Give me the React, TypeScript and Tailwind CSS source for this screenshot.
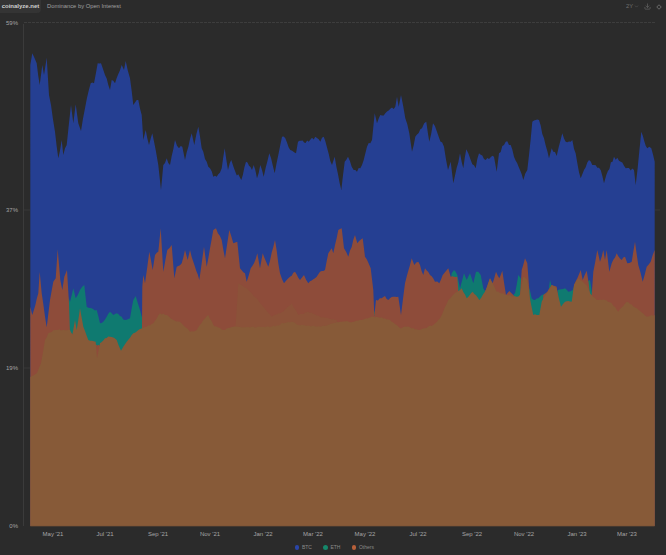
import React from "react";
import { ChevronDown, Download } from "lucide-react";

type P = [number, number];
const conv = (ox: number, oy: number, pts: P[]): P[] =>
  pts.map(([x, y]) => [ox + x / 3, oy + y / 3] as P);
const BASE = 526;
const L = 30.3;
const R = 654.6;

const hash = (n: number) => {
  const s = Math.sin(n * 127.1) * 43758.5453;
  return s - Math.floor(s);
};

// Adds the fine day-to-day jitter of the series between the traced points.
const densify = (pts: P[], amp: number, seed: number): P[] => {
  const out: P[] = [];
  for (let i = 0; i < pts.length - 1; i++) {
    const [x0, y0] = pts[i];
    const [x1, y1] = pts[i + 1];
    out.push([x0, y0]);
    const steps = Math.floor((x1 - x0) / 1.5);
    for (let s = 1; s < steps; s++) {
      const t = s / steps;
      const n = hash(seed + i * 31 + s) - 0.5;
      out.push([x0 + (x1 - x0) * t, y0 + (y1 - y0) * t + n * amp * 2]);
    }
  }
  out.push(pts[pts.length - 1]);
  return out;
};

const poly = (pts: P[]) => {
  const a = pts[0][0];
  const b = pts[pts.length - 1][0];
  return [`${a},${BASE}`, ...pts.map(([x, y]) => `${x.toFixed(1)},${y.toFixed(1)}`), `${b},${BASE}`].join(" ");
};

const blue: P[] = densify([
  ...conv(25, 45, [[16,60],[22,25],[35,55],[44,120],[52,60],[57,90],[65,38],[72,150],[78,180],[90,260],[100,340],[110,285],[115,330],[125,300],[138,180],[145,235],[152,178],[160,235],[168,258],[180,190],[197,115],[207,115],[218,55],[228,55],[240,90],[255,135],[260,105],[270,115],[290,60],[297,75],[302,48],[315,100],[325,180],[340,165],[350,210],[355,285],[362,255],[372,300],[382,265],[392,315],[400,360],[408,435],[415,360],[425,340],[435,360],[450,285],[462,310],[472,305],[480,345],[500,265],[508,300],[520,245],[530,310],[545,350],[565,395],[575,395],[590,370]]),
  ...conv(222, 90, [[8,175],[18,240],[28,210],[40,245],[58,270],[72,215],[90,240],[95,225],[105,265],[115,225],[125,260],[142,190],[158,250],[180,140],[190,145],[205,180],[222,190],[228,155],[260,155],[280,140],[295,155],[305,140],[330,225],[338,200],[358,300],[368,215],[378,200],[395,240],[405,245],[420,225],[435,170],[450,150],[458,70],[465,100],[475,75],[490,70],[520,50],[525,20],[530,50],[537,15],[550,85],[562,130],[570,185],[580,140],[600,115],[613,95],[622,155],[633,100],[650,140],[666,170]]),
  ...conv(444, 90, [[12,240],[20,215],[28,280],[48,190],[58,235],[67,178],[80,210],[95,235],[105,190],[125,210],[150,200],[158,245],[165,190],[185,155],[200,165],[210,200],[238,270],[250,240],[265,95],[285,90],[300,145],[315,205],[323,175],[338,198],[355,130],[365,155],[385,150],[410,265],[435,210],[450,225],[470,240],[480,280],[487,255],[510,200],[530,215],[545,235],[570,240],[575,285],[592,125],[610,175],[622,175],[632,215]]),
], 1.8, 11);

const red: P[] = densify([
  ...conv(25, 220, [[16,260],[22,285],[40,220],[44,155],[50,220],[65,322],[75,240],[85,185],[92,175],[98,88],[106,180],[112,210],[118,170],[126,150],[132,250],[135,340],[350,430],[352,200],[355,165]]),
  ...conv(140, 220, [[10,165],[15,190],[28,95],[38,150],[45,105],[55,95],[62,25],[70,155],[82,90],[95,75],[103,175],[110,140],[125,130],[135,90],[143,120],[150,90],[160,125],[178,180],[192,80],[200,140],[220,30],[228,25],[245,60],[255,115],[268,30],[280,70],[292,65],[300,145],[315,160],[320,185],[332,145],[342,130],[352,100],[360,145],[368,100],[385,140],[405,60],[420,160],[432,190],[445,175],[465,155],[480,180],[492,165],[505,190],[525,175],[540,155]]),
  ...conv(320, 220, [[15,150],[25,100],[35,85],[40,100],[55,30],[65,25],[72,85],[85,110],[105,45],[112,70],[128,55],[135,110],[152,145],[160,210],[163,288],[168,240],[185,235],[195,228],[205,240],[220,230],[235,230],[243,285],[255,190],[275,115],[283,135],[295,125],[310,165],[315,145],[330,165],[345,185],[358,190],[368,165],[385,145],[392,170],[412,170],[418,250],[490,255],[495,215],[510,175]]),
  ...conv(490, 230, [[8,160],[18,125],[28,145],[37,122],[48,195],[58,183],[70,195],[85,205],[90,195],[95,120],[105,85],[112,100],[118,180],[122,265],[155,265],[160,195],[172,185],[178,175],[185,165],[200,170],[208,235],[248,235],[252,165],[262,145],[272,120],[278,150],[290,122],[296,160],[300,195],[305,195],[310,125],[322,60],[330,95],[340,60],[345,90],[350,60],[358,125],[365,100],[380,70],[395,90],[405,80],[412,100],[425,95],[435,35],[445,105],[458,155],[470,110],[482,95],[494,60]]),
], 1.1, 47);

const mid: P[] = densify(
  conv(140, 220, [[285,340],[295,190],[320,205],[350,235],[370,260],[395,290],[430,275],[455,250],[475,285],[505,275],[540,290],[590,300],[600,340]]),
  0.6, 83);

const brown: P[] = densify([
  [L, 377], [37, 373],
  ...conv(25, 220, [[48,430],[60,360],[70,340],[90,330],[135,330],[142,345],[150,300],[155,330],[165,265],[175,320],[190,360],[212,365],[216,415],[225,370],[240,355],[255,350],[275,360],[288,392],[295,380],[305,365],[320,345],[340,330]]),
  ...conv(140, 220, [[20,320],[40,310],[60,280],[80,285],[100,300],[120,305],[150,335],[170,330],[190,300],[205,285],[220,315],[250,330],[280,320],[320,322],[395,320],[430,310],[455,305],[475,315],[540,320]]),
  ...conv(320, 220, [[60,305],[100,305],[160,290],[170,290],[210,300],[240,325],[260,320],[300,330],[340,315],[360,295],[385,240],[410,215],[425,205],[440,235],[458,215],[478,240],[495,215],[510,175]]),
  ...conv(490, 230, [[20,185],[50,195],[80,200],[90,195],[100,140],[112,150],[118,195],[130,255],[140,255],[148,255],[155,215],[170,190],[185,165],[200,175],[213,230],[225,215],[245,215],[252,165],[265,145],[290,165],[300,190],[320,210],[345,210],[365,220],[385,245],[410,215],[440,235],[470,260],[494,255]]),
], 0.7, 101);

const teal: P[][] = [
  conv(25, 220, [[128,300],[130,230],[135,245],[145,205],[152,235],[165,210],[178,195],[185,260],[200,265],[215,270],[225,310],[235,305],[255,275],[265,285],[275,280],[300,300],[315,295],[325,240],[332,228],[345,270],[353,300]]),
  conv(320, 220, [[160,270],[164,275],[166,290]]),
  conv(320, 220, [[390,200],[395,160],[402,150],[412,165],[420,205],[432,160],[440,180],[450,160],[460,190],[468,155],[475,155],[482,165],[490,205],[496,215]]),
  conv(490, 230, [[70,195],[75,190],[85,135],[92,145],[96,170]]),
  conv(490, 230, [[116,170],[125,205],[135,210],[145,205],[155,195],[165,190],[175,190],[180,150],[185,170]]),
  conv(490, 230, [[203,180],[225,175],[235,185],[248,180],[252,170]]),
  conv(490, 230, [[272,155],[275,150],[290,155],[300,150],[306,190]]),
].map((t, i) => densify(t, 1, 200 + i));

const xLabels: [string, number][] = [
  ["May '21", 53], ["Jul '21", 105], ["Sep '21", 158], ["Nov '21", 210], ["Jan '22", 263], ["Mar '22", 313],
  ["May '22", 365], ["Jul '22", 418], ["Sep '22", 472], ["Nov '22", 524], ["Jan '23", 577], ["Mar '23", 627],
];
const yLabels: [string, number][] = [["59%", 23], ["37%", 210], ["19%", 368], ["0%", 526]];

const legend: [string, string][] = [["BTC", "bg-[#2a45a8]"], ["ETH", "bg-[#15876a]"], ["Others", "bg-[#b8603a]"]];

export default function App() {
  return (
    <div className="flex h-[555px] w-[666px] flex-col overflow-hidden bg-[#2b2b2b] font-['Liberation_Sans',sans-serif]">
      <header className="flex h-[16px] items-start text-[5.8px]">
        <div className="flex h-[13px] w-[41px] items-center justify-center rounded-br-sm bg-[#343434] text-[6px] font-bold text-[#cfcfcf]">
          coinalyze.net
        </div>
        <div className="ml-[6px] flex h-[13px] items-center text-[#a0a0a0]">Dominance by Open Interest</div>
        <div className="ml-auto mr-[4px] flex h-[13px] items-center text-[#6f6f6f]">
          <span>2Y</span>
          <ChevronDown className="ml-[1px] h-[5px] w-[5px]" />
          <Download className="ml-[5px] h-[7px] w-[7px]" />
          <svg viewBox="0 0 8 8" className="ml-[5px] h-[6px] w-[6px]" fill="none" stroke="currentColor" strokeWidth="1.2">
            <path d="M4 1 L7 4 L4 7 L1 4 Z" />
          </svg>
        </div>
      </header>
      <svg viewBox="0 16 666 524" className="block h-[524px] w-[666px]" fontFamily="'Liberation Sans', sans-serif">
        <line x1="24" x2="655" y1="22.5" y2="22.5" stroke="#454545" strokeWidth="0.7" strokeDasharray="3 1" />
        <line x1="23.5" x2="23.5" y1="24" y2="526" stroke="#3b3b3b" strokeWidth="1" />
        <line x1="24" x2="30" y1="210" y2="210" stroke="#3d3d3d" strokeWidth="0.7" />
        <line x1="24" x2="30" y1="368" y2="368" stroke="#3d3d3d" strokeWidth="0.7" />
        <line x1="655" x2="660" y1="210" y2="210" stroke="#3d3d3d" strokeWidth="0.7" />
        <polygon points={poly(blue)} fill="#253f92" />
        {teal.map((t, i) => (
          <polygon key={i} points={poly(t)} fill="#0f7a70" />
        ))}
        <polygon points={poly(red)} fill="#8e4c3a" />
        <polygon points={poly(mid)} fill="#8b5239" />
        <polygon points={poly(brown)} fill="#875a38" />
        <line x1={L} x2={R} y1="526.2" y2="526.2" stroke="#6d4d35" strokeWidth="0.6" />
        {yLabels.map(([t, y]) => (
          <text key={t} x="18" y={y + 2} textAnchor="end" fontSize="6" fill="#a5a5a5">{t}</text>
        ))}
        {xLabels.map(([t, x]) => (
          <text key={t} x={x} y="535.5" textAnchor="middle" fontSize="6" fill="#a5a5a5">{t}</text>
        ))}
      </svg>
      <footer className="flex h-[15px] items-center justify-center gap-[11.5px] pl-[3px] text-[5px] text-[#8a8a8a]">
        {legend.map(([t, c]) => (
          <div key={t} className="flex items-center gap-[2.5px]">
            <span className={`h-[4.5px] w-[4.5px] rounded-full ${c}`} />
            <span>{t}</span>
          </div>
        ))}
      </footer>
    </div>
  );
}
